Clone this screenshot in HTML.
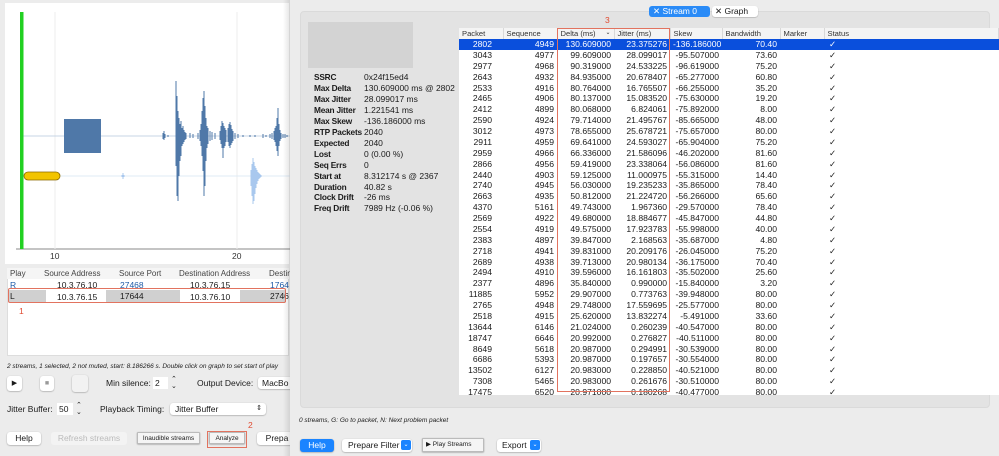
<!DOCTYPE html>
<html><head><meta charset="utf-8"><style>
*{margin:0;padding:0;box-sizing:border-box}
body{width:999px;height:456px;overflow:hidden;background:#ececec;font-family:"Liberation Sans",sans-serif;position:relative;color:#1a1a1a}
.a{position:absolute;white-space:nowrap}
.f8{font-size:8px}
.btn{position:absolute;background:#fff;border-radius:3px;box-shadow:0 0.5px 1.5px rgba(0,0,0,.35);font-size:8.5px;text-align:center;line-height:12px}
table{border-collapse:collapse;table-layout:fixed;font-size:8.6px}
td{height:10.875px;padding:0 3px;text-align:right;white-space:nowrap;line-height:10.875px}
tr.sel td{background:#0a4fdc;color:#fff}
th{font-weight:normal;text-align:left;padding:0 3px;height:11px;border-right:1px solid #d8d8d8;font-size:7.6px;color:#333}
</style></head><body>
<!-- LEFT WINDOW -->
<div class="a" style="left:5px;top:3px;width:284px;height:261px;background:#fff"></div>
<svg class="a" style="left:0;top:0" width="290" height="265" id="wv">
<line x1="16" y1="249" x2="290" y2="249" stroke="#888" stroke-width="1"/>
<line x1="55" y1="12" x2="55" y2="249" stroke="#eee"/><line x1="237" y1="12" x2="237" y2="249" stroke="#eee"/>
<line x1="22" y1="136" x2="290" y2="136" stroke="#b5c8dc" stroke-width="0.8"/>
<line x1="22" y1="176" x2="290" y2="176" stroke="#d5e4f3" stroke-width="0.8"/>
<rect x="64" y="119" width="37" height="34" fill="#4f78a8"/>
<rect x="20" y="12" width="3.5" height="237" fill="#22d022"/>
<rect x="24" y="172" width="36" height="8" rx="4" fill="#f2c400" stroke="#8a6a00" stroke-width="0.8"/>
<text x="50" y="259" font-size="8.5" font-family="Liberation Sans" fill="#333">10</text>
<text x="232" y="259" font-size="8.5" font-family="Liberation Sans" fill="#333">20</text>
</svg>
<div class="a" style="left:7px;top:268px;width:282px;height:88px;background:#fff;border:1px solid #ddd"></div>
<div class="a f8" style="left:7px;top:268px;width:282px;height:11px;background:#f5f5f5;color:#444;line-height:11px">
<span class="a" style="left:3px">Play</span><span class="a" style="left:37px">Source Address</span><span class="a" style="left:112px">Source Port</span><span class="a" style="left:172px">Destination Address</span><span class="a" style="left:262px">Destin</span></div>
<div class="a" style="font-size:8.5px;left:10px;top:280px;color:#1f5ca8">R</div>
<div class="a" style="font-size:8.5px;left:57px;top:280px">10.3.76.10</div>
<div class="a" style="font-size:8.5px;left:120px;top:280px;color:#1f5ca8">27468</div>
<div class="a" style="font-size:8.5px;left:190px;top:280px">10.3.76.15</div>
<div class="a" style="font-size:8.5px;left:270px;top:280px;color:#1f5ca8">1764</div>
<div class="a" style="left:8px;top:290px;width:278px;height:12px;background:#d0d0d0"></div>
<div class="a" style="left:46px;top:290px;width:60px;height:12px;background:#fff"></div>
<div class="a" style="left:180px;top:290px;width:60px;height:12px;background:#fff"></div>
<div class="a" style="font-size:8.5px;left:10px;top:291px">L</div>
<div class="a" style="font-size:8.5px;left:57px;top:292px">10.3.76.15</div>
<div class="a" style="font-size:8.5px;left:120px;top:291px">17644</div>
<div class="a" style="font-size:8.5px;left:190px;top:292px">10.3.76.10</div>
<div class="a" style="font-size:8.5px;left:270px;top:291px">2746</div>
<div class="a" style="left:8px;top:288px;width:278px;height:15px;border:1px solid #e2735f;border-radius:2px"></div>
<div class="a" style="font-size:8.5px;left:19px;top:306px;color:#e04a30">1</div>
<div class="a" style="font-size:6.5px;left:7px;top:363px;font-style:italic">2 streams, 1 selected, 2 not muted, start: 8.186266 s. Double click on graph to set start of play</div>
<div class="btn" style="left:7px;top:376px;width:15px;height:15px;font-size:7px;line-height:15px">▶</div>
<div class="btn" style="left:40px;top:376px;width:14px;height:15px;font-size:7px;line-height:15px;color:#999">■</div>
<div class="btn" style="left:72px;top:375px;width:16px;height:17px;background:#f2f2f2"></div>
<div class="a" style="font-size:8.5px;left:106px;top:378px">Min silence:</div>
<div class="a" style="left:153px;top:377px;width:15px;height:12px;background:#fff;font-size:8.5px;padding-left:2px;line-height:12px">2</div>
<div class="a" style="font-size:7px;left:171px;top:376px;line-height:7px">⌃<br>⌄</div>
<div class="a" style="font-size:8.5px;left:197px;top:378px">Output Device:</div>
<div class="btn" style="left:258px;top:377px;width:40px;height:12px;text-align:left;padding-left:4px">MacBo</div>
<div class="a" style="font-size:8.5px;left:7px;top:404px">Jitter Buffer:</div>
<div class="a" style="left:57px;top:403px;width:16px;height:12px;background:#fff;font-size:8.5px;padding-left:2px;line-height:12px">50</div>
<div class="a" style="font-size:7px;left:76px;top:402px;line-height:7px">⌃<br>⌄</div>
<div class="a" style="font-size:8.5px;left:100px;top:404px">Playback Timing:</div>
<div class="btn" style="left:170px;top:403px;width:96px;height:12px;text-align:left;padding-left:5px">Jitter Buffer<span style="position:absolute;right:4px;font-size:7px">⇕</span></div>
<div class="btn" style="left:7px;top:432px;width:34px;height:13px">Help</div>
<div class="btn" style="left:51px;top:432px;width:76px;height:13px;color:#bbb;background:#f3f3f3;box-shadow:none">Refresh streams</div>
<div class="btn" style="left:137px;top:432px;width:63px;height:12px;font-size:6.5px;border-radius:1px;background:#f5f5f5;border:1px solid #bbb">Inaudible streams</div>
<div class="btn" style="left:209px;top:432px;width:36px;height:12px;font-size:6.5px;border-radius:1px;background:#f5f5f5;border:1px solid #bbb">Analyze</div>
<div class="a" style="left:207px;top:431px;width:40px;height:17px;border:1px solid #e2735f"></div>
<div class="a" style="font-size:8.5px;left:248px;top:420px;color:#e04a30">2</div>
<div class="btn" style="left:257px;top:432px;width:40px;height:13px">Prepa</div>

<!-- RIGHT WINDOW -->
<div class="a" style="left:283px;top:0;width:8px;height:456px;background:linear-gradient(90deg,rgba(0,0,0,0),rgba(0,0,0,.12))"></div>
<div class="a" style="left:290px;top:0;width:709px;height:456px;background:#ececec"></div>
<div class="a" style="left:300px;top:11px;width:690px;height:397px;background:#e3e3e3;border:1px solid #dadada;border-radius:4px"></div>
<div class="a" style="left:649px;top:6px;width:61px;height:11px;background:#2a8bf7;border-radius:3px;color:#fff;font-size:8.5px;line-height:11px;padding-left:4px">✕ Stream 0</div>
<div class="a" style="left:712px;top:6px;width:46px;height:11px;background:#fff;border-radius:3px;font-size:8.5px;line-height:11px;padding-left:3px;box-shadow:0 0.5px 1px rgba(0,0,0,.3)">✕ Graph</div>
<div class="a" style="left:308px;top:22px;width:105px;height:46px;background:#d3d3d3"></div>
<div class="a" style="left:314px;top:72px;font-size:8.3px;line-height:10.95px;font-weight:bold;letter-spacing:-0.2px">SSRC<br>Max Delta<br>Max Jitter<br>Mean Jitter<br>Max Skew<br>RTP Packets<br>Expected<br>Lost<br>Seq Errs<br>Start at<br>Duration<br>Clock Drift<br>Freq Drift</div>
<div class="a" style="left:364px;top:72px;font-size:8.5px;line-height:10.95px">0x24f15ed4<br>130.609000 ms @ 2802<br>28.099017 ms<br>1.221541 ms<br>-136.186000 ms<br>2040<br>2040<br>0 (0.00 %)<br>0<br>8.312174 s @ 2367<br>40.82 s<br>-26 ms<br>7989 Hz (-0.06 %)</div>
<div class="a" style="left:459px;top:28px;width:540px;height:367px;background:#fff;overflow:hidden">
<table style="width:540px">
<colgroup><col style="width:44px"><col style="width:54px"><col style="width:57px"><col style="width:56px"><col style="width:52px"><col style="width:58px"><col style="width:44px"><col></colgroup>
<tr style="background:#f4f4f4"><th>Packet</th><th>Sequence</th><th>Delta (ms) <span style="float:right;font-size:6px">⌄</span></th><th>Jitter (ms)</th><th>Skew</th><th>Bandwidth</th><th>Marker</th><th>Status</th></tr>
<tr class="sel"><td style="padding-right:11px">2802</td><td>4949</td><td>130.609000</td><td>23.375276</td><td>-136.186000</td><td>70.40</td><td></td><td style="text-align:left;padding-left:5px">✓</td></tr>
<tbody id="b"></tbody>
</table></div>
<div class="a" style="left:557px;top:28px;width:113px;height:364px;border:1px solid #e2735f"></div>
<div class="a" style="left:605px;top:15px;font-size:8.5px;color:#e04a30">3</div>
<div class="a" style="left:299px;top:417px;font-size:6.5px;font-style:italic">0 streams, G: Go to packet, N: Next problem packet</div>
<div class="btn" style="left:300px;top:439px;width:34px;height:13px;background:#1a84ff;color:#fff">Help</div>
<div class="btn" style="left:342px;top:439px;width:70px;height:13px;text-align:left;padding-left:6px">Prepare Filter<span style="position:absolute;right:1px;top:1px;width:10px;height:10px;background:#1a84ff;border-radius:2px;color:#fff;font-size:6px;line-height:10px;text-align:center">⌄</span></div>
<div class="btn" style="left:422px;top:438px;width:62px;height:14px;font-size:6.5px;border-radius:1px;background:#f5f5f5;border:1px solid #bbb;text-align:left;padding-left:3px">▶ Play Streams</div>
<div class="btn" style="left:497px;top:439px;width:44px;height:13px;text-align:left;padding-left:5px">Export<span style="position:absolute;right:1px;top:1px;width:10px;height:10px;background:#1a84ff;border-radius:2px;color:#fff;font-size:6px;line-height:10px;text-align:center">⌄</span></div>
<script>
var d=`3043 4977 99.609000 28.099017 -95.507000 73.60
2977 4968 90.319000 24.533225 -96.619000 75.20
2643 4932 84.935000 20.678407 -65.277000 60.80
2533 4916 80.764000 16.765507 -66.255000 35.20
2465 4906 80.137000 15.083520 -75.630000 19.20
2412 4899 80.068000 6.824061 -75.892000 8.00
2590 4924 79.714000 21.495767 -85.665000 48.00
3012 4973 78.655000 25.678721 -75.657000 80.00
2911 4959 69.641000 24.593027 -65.904000 75.20
2959 4966 66.336000 21.586096 -46.202000 81.60
2866 4956 59.419000 23.338064 -56.086000 81.60
2440 4903 59.125000 11.000975 -55.315000 14.40
2740 4945 56.030000 19.235233 -35.865000 78.40
2663 4935 50.812000 21.224720 -56.266000 65.60
4370 5161 49.743000 1.967360 -29.570000 78.40
2569 4922 49.680000 18.884677 -45.847000 44.80
2554 4919 49.575000 17.923783 -55.998000 40.00
2383 4897 39.847000 2.168563 -35.687000 4.80
2718 4941 39.831000 20.209176 -26.045000 75.20
2689 4938 39.713000 20.980134 -36.175000 70.40
2494 4910 39.596000 16.161803 -35.502000 25.60
2377 4896 35.840000 0.990000 -15.840000 3.20
11885 5952 29.907000 0.773763 -39.948000 80.00
2765 4948 29.748000 17.559695 -25.577000 80.00
2518 4915 25.620000 13.832274 -5.491000 33.60
13644 6146 21.024000 0.260239 -40.547000 80.00
18747 6646 20.992000 0.276827 -40.511000 80.00
8649 5618 20.987000 0.294991 -30.539000 80.00
6686 5393 20.987000 0.197657 -30.554000 80.00
13502 6127 20.983000 0.228850 -40.521000 80.00
7308 5465 20.983000 0.261676 -30.510000 80.00
17475 6520 20.971000 0.180268 -40.477000 80.00`;
var h='';d.split('\n').forEach(function(l){var c=l.split(' ');h+='<tr><td style="padding-right:11px">'+c[0]+'</td><td>'+c[1]+'</td><td>'+c[2]+'</td><td>'+c[3]+'</td><td>'+c[4]+'</td><td>'+c[5]+'</td><td></td><td style="text-align:left;padding-left:5px">✓</td></tr>';});
document.getElementById('b').innerHTML=h;
// waveform bursts: [x, up, down]
var w=[[163,3,3],[164,5,4],[165,2,2],[168,1,1],[176,55,30],[177,40,60],[178,25,65],[179,18,40],[180,12,25],[181,15,20],[182,8,10],[183,10,8],[184,6,6],[185,4,4],[186,3,3],[190,3,2],[193,2,2],[198,3,3],[200,6,5],[201,12,10],[202,25,20],[203,38,35],[204,45,60],[205,30,50],[206,18,25],[207,10,12],[208,8,8],[210,5,5],[212,4,4],[215,3,3],[220,5,4],[221,10,8],[222,15,12],[223,13,22],[224,10,12],[225,8,10],[226,6,6],[228,8,6],[229,12,10],[230,14,12],[231,11,9],[232,7,7],[233,5,5],[235,3,3],[238,2,2],[243,1,1],[250,1,1],[255,1,1],[263,2,2],[266,1,1],[270,2,2],[272,3,3],[274,5,4],[275,8,6],[276,10,10],[277,18,15],[278,28,20],[279,12,10],[280,6,5],[281,3,3],[283,2,2],[285,2,2],[287,1,1]];
var s='';w.forEach(function(p){s+='<line x1="'+p[0]+'" x2="'+p[0]+'" y1="'+(136-p[1])+'" y2="'+(136+p[2])+'" stroke="#4f78a8" stroke-width="1"/>';});
var w2=[[251,6,10],[252,12,20],[253,18,28],[254,14,25],[255,10,18],[256,8,12],[257,6,8],[258,4,5],[259,3,3],[260,2,2],[261,1,1],[122,1,1],[123,3,3],[124,1,1]];
w2.forEach(function(p){s+='<line x1="'+p[0]+'" x2="'+p[0]+'" y1="'+(176-p[1])+'" y2="'+(176+p[2])+'" stroke="#a9c8ee" stroke-width="1"/>';});
document.getElementById('wv').insertAdjacentHTML('beforeend',s);
</script>
</body></html>
